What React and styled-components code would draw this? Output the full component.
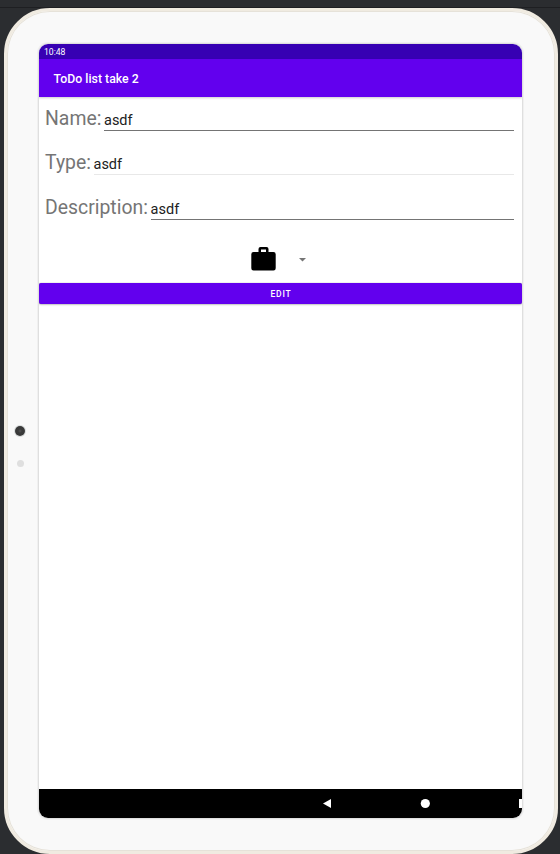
import React from "react";
import styled, { createGlobalStyle } from "styled-components";

const GlobalStyle = createGlobalStyle`
  * { box-sizing: border-box; }
  body { margin: 0; background: #2b2d30; font-family: Roboto, sans-serif; overflow: hidden; }
`;

const Desktop = styled.main`
  width: 560px;
  height: 854px;
  padding: 8px 2px 0 4px;
  background: linear-gradient(#2b2d30 7px, #1e1f22 7px, #1e1f22 8px, #2b2d30 8px);
`;

const Tablet = styled.div`
  position: relative;
  width: 554px;
  height: 846px;
  padding: 32px 31px 0 31px;
  border: 3px solid #f0ebe1;
  border-radius: 46px;
  background: #f9f9f9;
  box-shadow: inset 0 0 0 1px #e6e2d9;
`;

const Lens = styled.span`
  position: absolute;
  left: 8px;
  top: 415px;
  width: 10px;
  height: 10px;
  border-radius: 50%;
  background: radial-gradient(circle, #555 0, #3a3a3a 2px, #383838 5px);
  box-shadow: 0 0 0 1px #d8dcdc;
`;

const Sensor = styled.span`
  position: absolute;
  left: 10px;
  top: 449px;
  width: 7px;
  height: 7px;
  border-radius: 50%;
  background: #dfdfdf;
`;

const Screen = styled.section`
  display: flex;
  flex-direction: column;
  width: 483px;
  height: 774px;
  margin: 1px 0 0 1px;
  overflow: hidden;
  border-radius: 9px;
  background: #fff;
`;

const Bezel = styled.div`
  width: 485px;
  height: 776px;
  border-radius: 10px;
  box-shadow: inset 0 0 0 1px #dfdfdf, 0 0 0 1px #f0f0f0;
  display: flow-root;
`;

const StatusBar = styled.div`
  height: 15px;
  flex: none;
  padding-left: 5px;
  background: #3700b3;
  color: #fff;
  font-size: 8.6px;
  line-height: 16px;
`;

const AppBar = styled.header`
  height: 38px;
  flex: none;
  padding-left: 14.6px;
  background: #6200ee;
  color: #fff;
  font-size: 12.3px;
  font-weight: 500;
  line-height: 40px;
  box-shadow: 0 1px 2px rgba(0, 0, 0, 0.2);
`;

const Form = styled.form`
  display: flex;
  flex-direction: column;
  flex: 1;
`;

const Field = styled.div`
  display: flex;
  height: ${(p) => p.$height}px;
  padding: 0 8px 0 6px;
`;

const Label = styled.label`
  flex: none;
  width: ${(p) => p.$width}px;
  color: #757575;
  font-size: 19.4px;
  line-height: 44px;
  white-space: nowrap;
`;

const Value = styled.div`
  flex: 1;
  height: 34px;
  border-bottom: 1px solid ${(p) => (p.$muted ? "#e8e8e8" : "#747474")};
  color: #212121;
  font-size: 14.5px;
  line-height: 48px;
`;

const IconPicker = styled.div`
  display: flex;
  align-items: flex-start;
  height: 52.5px;
  padding: 16px 0 0 212px;
  gap: 23px;
`;

const Briefcase = styled.svg`
  width: 25px;
  height: 24px;
`;

const Caret = styled.svg`
  width: 7px;
  height: 4px;
  margin-top: 11px;
`;

const EditButton = styled.button`
  height: 21px;
  padding: 1px 0 0 1px;
  border: 0;
  border-radius: 2px;
  background: #6200ee;
  color: #fff;
  font: 500 8.5px/20px Roboto, sans-serif;
  letter-spacing: 0.8px;
  box-shadow: 0 0 1px rgba(0, 0, 0, 0.5), 0 1px 2px rgba(0, 0, 0, 0.2);
`;

const NavBar = styled.nav`
  height: 29px;
  flex: none;
  background: #000;
`;

const NavIcons = styled.svg`
  display: block;
  width: 483px;
  height: 29px;
`;

const fields = [
  { label: "Name:", width: 59, height: 44 },
  { label: "Type:", width: 48.5, height: 45, muted: true },
  { label: "Description:", width: 105.6, height: 44.5 },
];

export default function App() {
  return (
    <Desktop>
      <GlobalStyle />
      <Tablet>
        <Lens />
        <Sensor />
        <Bezel>
          <Screen>
            <StatusBar>10:48</StatusBar>
            <AppBar>ToDo list take 2</AppBar>
            <Form>
              {fields.map((f) => (
                <Field key={f.label} $height={f.height}>
                  <Label $width={f.width}>{f.label}</Label>
                  <Value $muted={f.muted}>asdf</Value>
                </Field>
              ))}
              <IconPicker>
                <Briefcase viewBox="0 0 25 24">
                  <path
                    fillRule="evenodd"
                    d="M9.5 0h6a2 2 0 0 1 2 2v3H22.5a2.2 2.2 0 0 1 2.2 2.2v14a2.2 2.2 0 0 1-2.2 2.2h-20a2.2 2.2 0 0 1-2.2-2.2v-14A2.2 2.2 0 0 1 2.5 5H7.5V2a2 2 0 0 1 2-2ZM10 2.4V5h5V2.4Z"
                  />
                </Briefcase>
                <Caret viewBox="0 0 7 4">
                  <path d="M0 0h7L3.5 3.6Z" fill="#757575" />
                </Caret>
              </IconPicker>
              <EditButton type="button">EDIT</EditButton>
            </Form>
            <NavBar>
              <NavIcons viewBox="0 0 483 29" fill="#fff">
                <path d="M284 14.5 292 10v9Z" />
                <circle cx="386.3" cy="14.5" r="4.6" />
                <rect x="480" y="10" width="9" height="9" />
              </NavIcons>
            </NavBar>
          </Screen>
        </Bezel>
      </Tablet>
    </Desktop>
  );
}
